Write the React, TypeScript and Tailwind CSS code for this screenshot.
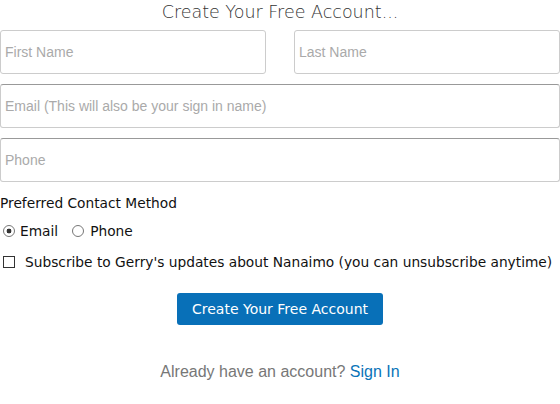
import React, { useState } from 'react';

const heading = "font-['DejaVu_Sans',sans-serif]";
const arial = "font-['Liberation_Sans',Arial,sans-serif]";

const Field = ({ placeholder, className = '' }: { placeholder: string; className?: string }) => (
  <input
    placeholder={placeholder}
    className={`h-11 w-full rounded-[3px] border border-[#ccc] border-t-[#999] bg-white px-1 text-sm text-[#333] outline-none placeholder:text-[#aaa] ${arial} ${className}`}
  />
);

const radioCls =
  'h-[12px] w-[12px] appearance-none rounded-full border border-[#777] bg-white checked:bg-[radial-gradient(circle,#333_0,#333_30%,#fff_38%)]';

export default function App() {
  const [method, setMethod] = useState('email');
  const [subscribe, setSubscribe] = useState(false);

  return (
    <div className="w-[560px] bg-white">
      <h1 className={`text-center text-[17.5px] font-light leading-[24px] text-[#333] ${heading}`}>
        Create Your Free Account...
      </h1>

      <form className="mt-[6px] flex flex-col" onSubmit={e => e.preventDefault()}>
        <div className="flex gap-[28px]">
          <Field placeholder="First Name" className="border-t-[#ccc]" />
          <Field placeholder="Last Name" className="border-t-[#ccc]" />
        </div>
        <Field placeholder="Email (This will also be your sign in name)" className="mt-[10px]" />
        <Field placeholder="Phone" className="mt-[10px]" />

        <p className={`mt-[12px] text-[13.75px] leading-[18px] text-[#111] ${heading}`}>
          Preferred Contact Method
        </p>

        <div className={`mt-[10px] flex items-center text-[13.75px] leading-[18px] text-[#111] ${heading}`}>
          <label className="flex items-center">
            <input
              type="radio"
              checked={method === 'email'}
              onChange={() => setMethod('email')}
              className={`ml-[3px] mr-[5px] ${radioCls}`}
            />
            Email
          </label>
          <label className="ml-[14px] flex items-center">
            <input
              type="radio"
              checked={method === 'phone'}
              onChange={() => setMethod('phone')}
              className={`mr-[6px] ${radioCls}`}
            />
            Phone
          </label>
        </div>

        <label className={`mt-[13px] flex items-center text-[13.75px] leading-[18px] text-[#111] ${heading}`}>
          <input
            type="checkbox"
            checked={subscribe}
            onChange={() => setSubscribe(!subscribe)}
            className="ml-[3px] mr-[10px] h-[12px] w-[12px] appearance-none border border-[#333] bg-white checked:bg-[#333]"
          />
          Subscribe to Gerry's updates about Nanaimo (you can unsubscribe anytime)
        </label>

        <button
          type="submit"
          className={`mx-auto mt-[22px] h-[32px] w-[206px] rounded-[3px] bg-[#0870b8] text-[14px] text-white ${heading}`}
        >
          Create Your Free Account
        </button>
      </form>

      <p className={`mt-[35px] text-center text-base text-[#777] ${arial}`}>
        Already have an account? <a href="#" className="text-[#0a74b8]">Sign In</a>
      </p>
    </div>
  );
}
